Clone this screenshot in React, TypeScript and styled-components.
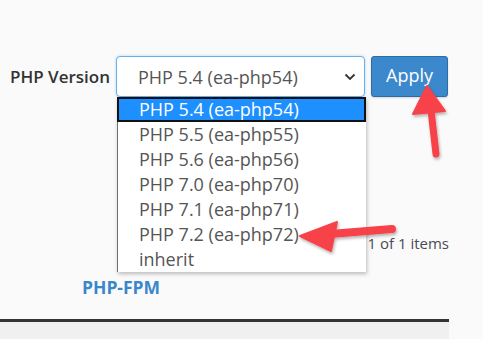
import React from "react";
import styled, { createGlobalStyle } from "styled-components";

const GlobalStyle = createGlobalStyle`
  html, body {
    margin: 0;
    padding: 0;
    background: #fafafa;
    font-family: "Open Sans", "Liberation Sans", sans-serif;
  }
`;

const Page = styled.div`
  position: relative;
  width: 483px;
  height: 339px;
  overflow: hidden;
  display: flex;
  background: #fafafa;
`;

const Main = styled.div`
  width: 449px;
  display: flex;
  flex-direction: column;
  padding-top: 56px;
`;

const FormRow = styled.div`
  display: flex;
  align-items: center;
  padding-left: 10px;
  height: 41px;
`;

const Label = styled.label`
  font-size: 17px;
  font-weight: 600;
  color: #333;
  width: 106px;
  white-space: nowrap;
`;

const SelectWrap = styled.div`
  position: relative;
  width: 249px;
  height: 41px;
`;

const SelectBox = styled.div`
  box-sizing: border-box;
  height: 41px;
  border: 1px solid #66afe9;
  border-radius: 4px;
  background: #fff;
  box-shadow: 0 0 3px rgba(102, 175, 233, 0.45);
  display: flex;
  align-items: center;
  justify-content: space-between;
  padding: 0 8px 0 21px;
  font-size: 18px;
  color: #555;
`;

const List = styled.ul`
  position: absolute;
  top: 41px;
  left: 1px;
  width: 249px;
  margin: 0;
  padding: 0;
  list-style: none;
  background: #fff;
  border-left: 1px solid #6f6f6f;
  box-sizing: border-box;
  box-shadow: 1px 2px 4px rgba(0, 0, 0, 0.25);
  z-index: 2;
`;

const Item = styled.li<{ $active?: boolean }>`
  box-sizing: border-box;
  height: 25px;
  line-height: ${(p) => (p.$active ? "21px" : "25px")};
  padding-left: ${(p) => (p.$active ? "20px" : "21px")};
  font-size: 18px;
  white-space: nowrap;
  color: ${(p) => (p.$active ? "#fff" : "#555")};
  background: ${(p) => (p.$active ? "#1e8fff" : "#fff")};
  border: ${(p) => (p.$active ? "2px solid #111" : "none")};
  margin-left: ${(p) => (p.$active ? "-1px" : "0")};
`;

const ApplyButton = styled.button`
  margin-left: 6px;
  width: 77px;
  height: 41px;
  box-sizing: border-box;
  background: #3c88cd;
  border: 1px solid #2e6da4;
  border-radius: 3px;
  color: #fff;
  font-family: "Open Sans", "Liberation Sans", sans-serif;
  font-size: 18px;
  padding: 0 0 4px;
  box-shadow: 0 1px 2px rgba(0, 0, 0, 0.15);
`;

const Pager = styled.div`
  margin-top: 136px;
  text-align: right;
  font-size: 15px;
  line-height: 20px;
  color: #4a4a55;
  white-space: nowrap;
`;

const Title = styled.div`
  margin-top: 24px;
  padding-left: 82px;
  font-size: 17.5px;
  line-height: 20px;
  font-weight: 700;
  color: #3a87c9;
`;

const Footer = styled.div`
  margin-top: 22px;
  flex: 1;
  border-top: 3px solid #333;
  background: #f0f0f0;
`;

const Arrows = styled.svg`
  position: absolute;
  left: 0;
  top: 0;
  pointer-events: none;
  z-index: 5;
`;

const options = [
  "PHP 5.4 (ea-php54)",
  "PHP 5.5 (ea-php55)",
  "PHP 5.6 (ea-php56)",
  "PHP 7.0 (ea-php70)",
  "PHP 7.1 (ea-php71)",
  "PHP 7.2 (ea-php72)",
  "inherit",
];

function App() {
  return (
    <Page>
      <GlobalStyle />
      <Main>
        <FormRow>
          <Label>PHP Version</Label>
          <SelectWrap>
            <SelectBox>
              <span>PHP 5.4 (ea-php54)</span>
              <svg width="12" height="8" viewBox="0 0 12 8">
                <path d="M1.5 1.5 L6 6 L10.5 1.5" fill="none" stroke="#333" strokeWidth="1.8" />
              </svg>
            </SelectBox>
            <List>
              {options.map((o, i) => (
                <Item key={o} $active={i === 0}>
                  {o}
                </Item>
              ))}
            </List>
          </SelectWrap>
          <ApplyButton>Apply</ApplyButton>
        </FormRow>
        <Pager>1 of 1 items</Pager>
        <Title>PHP-FPM</Title>
        <Footer />
      </Main>
      <Arrows width="483" height="339" viewBox="0 0 483 339">
        <defs>
          <filter id="sh" x="-20%" y="-20%" width="140%" height="140%">
            <feDropShadow dx="1" dy="2" stdDeviation="1.5" floodColor="#000" floodOpacity="0.3" />
          </filter>
        </defs>
        <g fill="#f8424a" stroke="#f8424a" filter="url(#sh)">
          <path d="M431 110 L436 154" strokeWidth="7" strokeLinecap="round" fill="none" />
          <path d="M427 86 L445 111 L413 114 Z" strokeWidth="2" strokeLinejoin="round" />
          <path d="M392 229 L330 234" strokeWidth="8" strokeLinecap="round" fill="none" />
          <path d="M300 236 L337 222 L331 251 Z" strokeWidth="2" strokeLinejoin="round" />
        </g>
      </Arrows>
    </Page>
  );
}

export default App;
